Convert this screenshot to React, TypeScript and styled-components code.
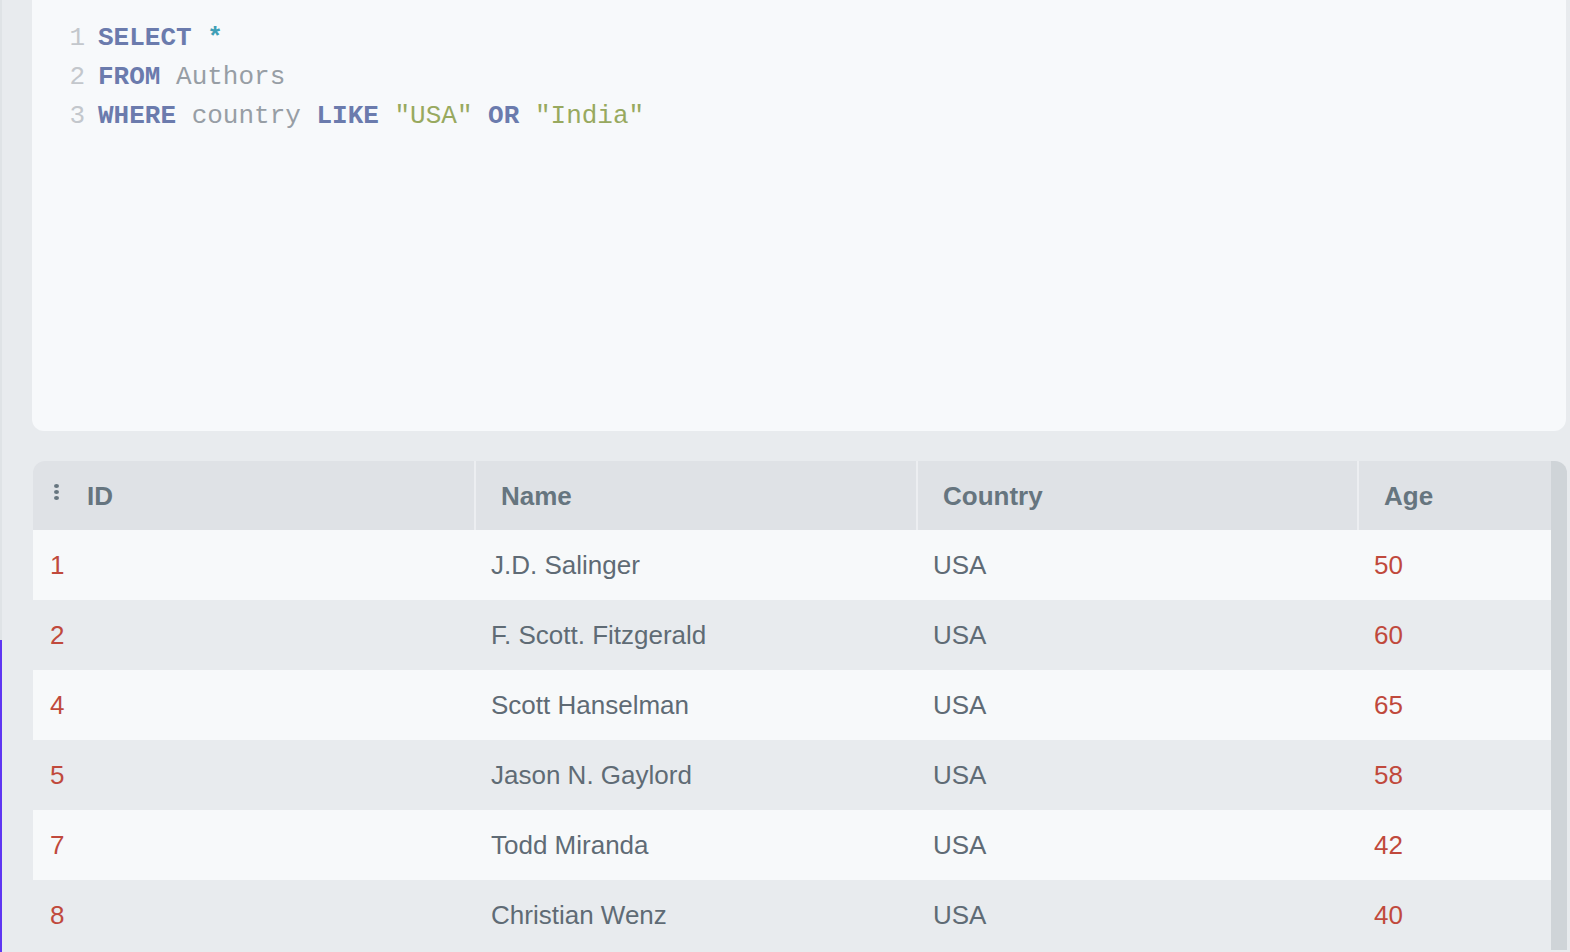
import React from "react";
import styled, { createGlobalStyle } from "styled-components";

const GlobalStyle = createGlobalStyle`
  html, body { margin: 0; padding: 0; background: #e8ebee; overflow: hidden; }
  #root { min-height: 100vh; }
`;

const Page = styled.div`
  display: flex;
  min-height: 100vh;
  background: #e8ebee;
`;

const Rail = styled.div`
  width: 2px;
  flex: none;
  display: flex;
  flex-direction: column;
`;

const RailSegment = styled.div<{ $accent?: boolean }>`
  background: ${(p) => (p.$accent ? "#5f36f2" : "#dfe3e6")};
  height: ${(p) => (p.$accent ? "auto" : "640px")};
  flex: ${(p) => (p.$accent ? "1" : "none")};
`;

const Main = styled.main`
  flex: 1;
  display: flex;
  flex-direction: column;
  gap: 30px;
  padding: 0 3px 0 30px;
  min-width: 0;
`;

const Editor = styled.section`
  height: 431px;
  box-sizing: border-box;
  background: #f7f9fb;
  border-radius: 0 0 12px 12px;
  padding: 19px 0 0 37px;
  margin-right: 1px;
  font-family: "Liberation Mono", "Courier New", monospace;
  font-size: 26px;
  line-height: 39px;
`;

const CodeLine = styled.div`
  display: block;
  white-space: pre;
`;

const LineNo = styled.span`
  display: inline-block;
  width: 16px;
  margin-right: 13px;
  text-align: right;
  color: #c3c7cc;
`;

const Tok = styled.span<{ $kind: "kw" | "op" | "id" | "str" }>`
  font-weight: ${(p) => (p.$kind === "kw" || p.$kind === "op" ? 700 : 400)};
  color: ${(p) =>
    p.$kind === "kw"
      ? "#6b7bad"
      : p.$kind === "op"
      ? "#3f9fb6"
      : p.$kind === "str"
      ? "#98a95f"
      : "#979ea5"};
`;

const TableFrame = styled.section`
  display: flex;
  border-radius: 12px 12px 0 0;
  overflow: hidden;
  margin-left: 1px;
`;

const Grid = styled.div`
  flex: 1;
  display: grid;
  grid-template-columns: 441px 442px 441px 1fr;
  font-family: "Liberation Sans", Arial, Helvetica, sans-serif;
  font-size: 26px;
`;

const Track = styled.div`
  width: 16px;
  flex: none;
  background: #cfd4d8;
`;

const HeadCell = styled.div<{ $first?: boolean }>`
  height: 69px;
  display: flex;
  align-items: center;
  gap: 28px;
  box-sizing: border-box;
  padding-left: ${(p) => (p.$first ? "21px" : "25px")};
  padding-top: 2px;
  background: #dfe2e6;
  border-left: ${(p) => (p.$first ? "none" : "2px solid #eceef1")};
  color: #66757f;
  font-weight: 700;
`;

const Dots = styled.span`
  display: flex;
  flex-direction: column;
  gap: 2px;
  margin-bottom: 10px;
  & > i {
    width: 5px;
    height: 4px;
    border-radius: 50%;
    background: #66757f;
  }
`;

const Cell = styled.div<{ $alt: boolean; $num?: boolean }>`
  height: 70px;
  display: flex;
  align-items: center;
  padding-left: 17px;
  background: ${(p) => (p.$alt ? "#e8ebee" : "#f7f9fa")};
  color: ${(p) => (p.$num ? "#c0493c" : "#5f6b75")};
`;

const rows = [
  { id: 1, name: "J.D. Salinger", country: "USA", age: 50 },
  { id: 2, name: "F. Scott. Fitzgerald", country: "USA", age: 60 },
  { id: 4, name: "Scott Hanselman", country: "USA", age: 65 },
  { id: 5, name: "Jason N. Gaylord", country: "USA", age: 58 },
  { id: 7, name: "Todd Miranda", country: "USA", age: 42 },
  { id: 8, name: "Christian Wenz", country: "USA", age: 40 },
];

export default function App() {
  return (
    <>
      <GlobalStyle />
      <Page>
        <Rail>
          <RailSegment />
          <RailSegment $accent />
        </Rail>
        <Main>
          <Editor>
            <CodeLine>
              <LineNo>1</LineNo>
              <Tok $kind="kw">SELECT</Tok>{" "}<Tok $kind="op">*</Tok>
            </CodeLine>
            <CodeLine>
              <LineNo>2</LineNo>
              <Tok $kind="kw">FROM</Tok>{" "}<Tok $kind="id">Authors</Tok>
            </CodeLine>
            <CodeLine>
              <LineNo>3</LineNo>
              <Tok $kind="kw">WHERE</Tok>{" "}<Tok $kind="id">country</Tok>{" "}
              <Tok $kind="kw">LIKE</Tok>{" "}<Tok $kind="str">"USA"</Tok>{" "}
              <Tok $kind="kw">OR</Tok>{" "}<Tok $kind="str">"India"</Tok>
            </CodeLine>
          </Editor>
          <TableFrame>
            <Grid>
              <HeadCell $first>
                <Dots>
                  <i />
                  <i />
                  <i />
                </Dots>
                ID
              </HeadCell>
              <HeadCell>Name</HeadCell>
              <HeadCell>Country</HeadCell>
              <HeadCell>Age</HeadCell>
              {rows.map((r, i) => (
                <React.Fragment key={r.id}>
                  <Cell $alt={i % 2 === 1} $num>
                    {r.id}
                  </Cell>
                  <Cell $alt={i % 2 === 1}>{r.name}</Cell>
                  <Cell $alt={i % 2 === 1}>{r.country}</Cell>
                  <Cell $alt={i % 2 === 1} $num>
                    {r.age}
                  </Cell>
                </React.Fragment>
              ))}
            </Grid>
            <Track />
          </TableFrame>
        </Main>
      </Page>
    </>
  );
}
